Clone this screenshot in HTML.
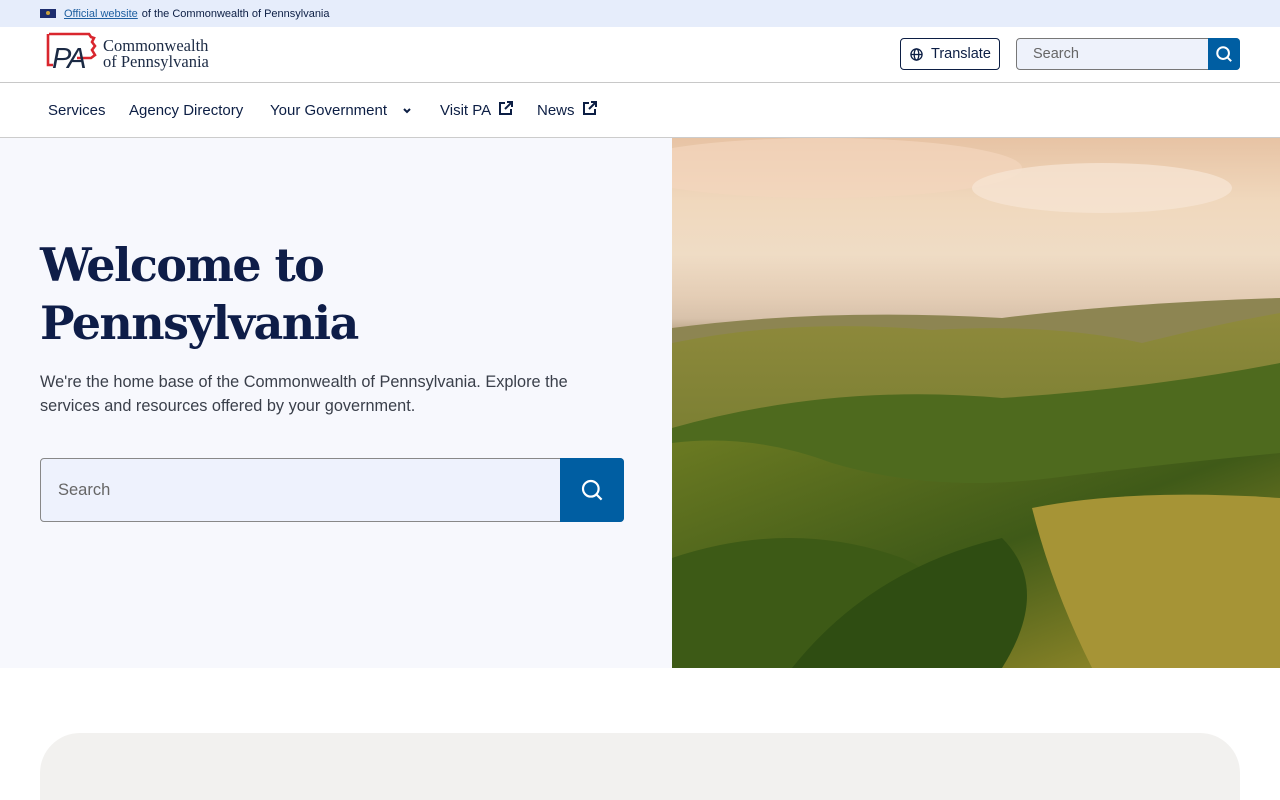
<!DOCTYPE html>
<html><head><meta charset="utf-8"><style>
*{box-sizing:border-box;margin:0;padding:0}
html,body{width:1280px;height:800px;overflow:hidden}
body{font-family:"Liberation Sans",sans-serif;background:#fff;color:#0c1e44;position:relative}
.top{height:27px;background:#e6edfb;font-size:11px;display:flex;align-items:center;padding-left:40px}
.flag{width:16px;height:9px;background:#1d2d6e;margin-right:8px;position:relative}
.flag:after{content:"";position:absolute;left:6px;top:2px;width:4px;height:4px;background:#c9a23c;border-radius:50%}
.top a{color:#1e5fa0;text-decoration:underline;margin-right:4px}
.hdr{height:56px;border-bottom:1px solid #c8c8c8;position:relative}
.logo{position:absolute;left:44px;top:4px}
.lt{position:absolute;left:103px;top:11px;font-family:"Liberation Serif",serif;font-size:16.5px;line-height:16px;color:#1b2a44}
.tr{position:absolute;left:900px;top:11px;width:100px;height:32px;border:1px solid #0c1e44;border-radius:4px;font-size:14.5px;display:flex;align-items:center;padding-left:9px;gap:8px}
.sr{position:absolute;left:1016px;top:11px;width:224px;height:32px;border:1px solid #777;border-radius:4px;background:#eef2fb;font-size:14.5px;color:#666;padding-left:16px;line-height:30px}
.sb{position:absolute;right:-1px;top:-1px;width:32px;height:32px;background:#005ea2;border-radius:0 4px 4px 0;display:flex;align-items:center;justify-content:center}
.nav{height:55px;border-bottom:1px solid #ccc;position:relative;font-size:15px;color:#0c1e44}
.nav span{position:absolute;top:18px;height:20px;display:flex;align-items:center;gap:7px;line-height:20px}
.hero{position:absolute;top:138px;left:0;width:1280px;height:530px}
.hl{position:absolute;left:0;top:0;width:672px;height:530px;background:#f7f8fd}
h1{position:absolute;left:40px;top:98px;font-family:"DejaVu Serif","Liberation Serif",serif;font-weight:bold;font-size:46px;line-height:58px;color:#0e1d48;letter-spacing:-1.6px;white-space:nowrap}
.p{position:absolute;left:40px;top:232px;width:580px;font-size:16.3px;line-height:24px;color:#3a3f4a}
.bs{position:absolute;left:40px;top:320px;width:584px;height:64px;border:1px solid #888;border-radius:4px;background:#eef2fd;font-size:16.5px;color:#666;padding-left:17px;line-height:62px}
.bs .sb{width:64px;height:64px}
.img{position:absolute;left:672px;top:0;width:608px;height:530px;overflow:hidden;
background:linear-gradient(180deg,#e7c3a4 0%,#f0d8bd 12%,#efdcc5 22%,#e4cdb5 30%,#d8c2ab 34%,#b5a080 37%)}
.card{position:absolute;left:40px;top:733px;width:1200px;height:67px;background:#f2f1ef;border-radius:40px 40px 0 0}
</style></head><body>
<div class="top"><div class="flag"></div><a>Official website</a>of the Commonwealth of Pennsylvania</div>
<div class="hdr">
<svg class="logo" width="54" height="42" viewBox="0 0 54 42"><path d="M5 3h40l2 3 3 1-2 4 3 4-3 4 3 5-4 3H33" fill="none" stroke="#d9262e" stroke-width="2.6"/><path d="M4 3v31h5" fill="none" stroke="#d9262e" stroke-width="2.6"/><text x="8" y="37" font-family="Liberation Sans" font-style="italic" font-size="29" fill="#1b2a44" letter-spacing="-2">PA</text></svg>
<div class="lt">Commonwealth<br>of Pennsylvania</div>
<div class="tr"><svg width="13" height="13" viewBox="0 0 14 14" fill="none" stroke="#0c1e44" stroke-width="1.4"><circle cx="7" cy="7" r="6"/><ellipse cx="7" cy="7" rx="2.5" ry="6"/><path d="M1 7h12"/></svg>Translate</div>
<div class="sr">Search<div class="sb"><svg width="18" height="18" viewBox="0 0 20 20" fill="none" stroke="#fff" stroke-width="2.2"><circle cx="9" cy="9" r="6.5"/><path d="M14 14l4 4"/></svg></div></div>
</div>
<div class="nav">
<span style="left:48px">Services</span>
<span style="left:129px">Agency Directory</span>
<span style="left:270px">Your Government <svg width="22" height="10" viewBox="0 0 22 10"><path d="M10 3l3 3 3-3" stroke="#0c1e44" stroke-width="2" fill="none"/></svg></span>
<span style="left:440px">Visit PA <svg width="16" height="16" viewBox="0 0 16 16" fill="none" stroke="#0c1e44" stroke-width="2" style="margin-top:-6px"><path d="M7 3H2v11h11V9M9 2h5v5M14 2L7 9"/></svg></span>
<span style="left:537px">News <svg width="16" height="16" viewBox="0 0 16 16" fill="none" stroke="#0c1e44" stroke-width="2" style="margin-top:-6px"><path d="M7 3H2v11h11V9M9 2h5v5M14 2L7 9"/></svg></span></div>
<div class="hero">
<div class="hl">
<h1>Welcome to<br>Pennsylvania</h1>
<div class="p">We're the home base of the Commonwealth of Pennsylvania. Explore the services and resources offered by your government.</div>
<div class="bs">Search<div class="sb"><svg width="24" height="24" viewBox="0 0 20 20" fill="none" stroke="#fff" stroke-width="1.8"><circle cx="9" cy="9" r="6.5"/><path d="M14 14l4 4"/></svg></div></div>
</div>
<div class="img"><svg width="608" height="530" viewBox="0 0 608 530">
<defs><linearGradient id="g1" x1="0" y1="0" x2="0" y2="1"><stop offset="0" stop-color="#8f8a3c"/><stop offset="1" stop-color="#556b22"/></linearGradient>
<linearGradient id="g2" x1="0" y1="0" x2="1" y2="1"><stop offset="0" stop-color="#6b7a22"/><stop offset="0.5" stop-color="#3f5a18"/><stop offset="1" stop-color="#a8942e"/></linearGradient></defs>
<ellipse cx="150" cy="30" rx="200" ry="30" fill="#f3d6bd" opacity=".7"/>
<ellipse cx="430" cy="50" rx="130" ry="25" fill="#f6e4d2" opacity=".8"/>
<path d="M0 190 Q150 170 330 180 Q450 165 608 160 V530 H0Z" fill="#8d8552"/>
<path d="M0 205 Q120 180 260 192 Q380 185 470 205 Q550 185 608 175 V530 H0Z" fill="url(#g1)"/>
<path d="M0 290 Q160 245 330 260 Q480 250 608 225 V530 H0Z" fill="#4e6a1e"/>
<path d="M0 305 Q80 295 160 325 Q260 355 380 340 Q500 325 608 315 V530 H0Z" fill="url(#g2)"/>
<path d="M0 420 Q120 380 230 420 Q300 450 280 530 H0Z" fill="#3d5a16"/>
<path d="M360 370 Q460 350 608 360 V530 H420 Q380 450 360 370Z" fill="#a69436"/>
<path d="M120 530 Q200 430 330 400 Q380 450 330 530Z" fill="#2f4d12"/>
</svg></div>
</div>
<div class="card"></div>
</body></html>
